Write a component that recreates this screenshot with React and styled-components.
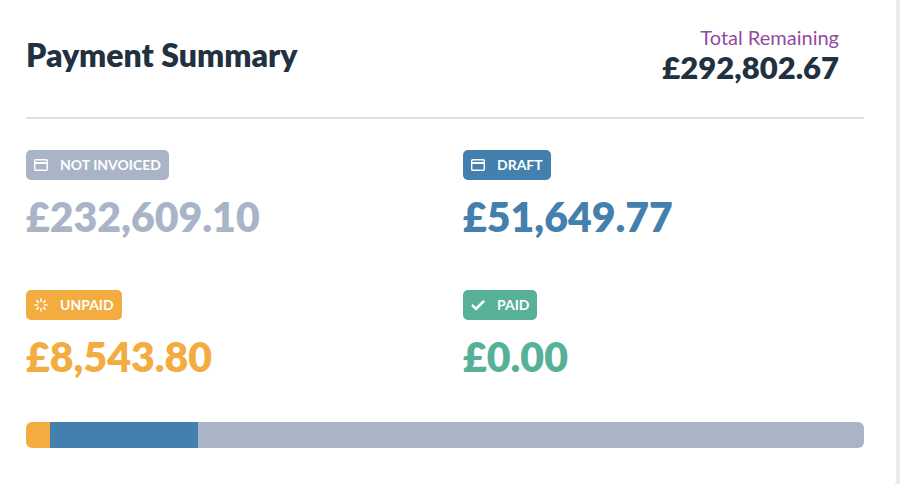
import React from 'react';
import styled, { createGlobalStyle } from 'styled-components';

const GlobalStyle = createGlobalStyle`
    * {
        box-sizing: border-box;
    }

    body {
        margin: 0;
        background: #e9ebf0;
        font-family: Lato, 'Open Sans', sans-serif;
        color: #22313f;
    }
`;

const Card = styled.section`
    margin-right: 4px;
    padding: 20px 32px 36px 26px;
    background: #fff;
    border-bottom-right-radius: 4px;
`;

const Header = styled.header`
    display: flex;
    justify-content: space-between;
    align-items: center;
    padding: 4px 25px 32px 0;
    border-bottom: 2px solid #dcdfe5;
`;

const Title = styled.h2`
    margin: 0;
    font-size: 32px;
    line-height: 40px;
    font-weight: 800;
`;

const Total = styled.div`
    text-align: right;
`;

const TotalLabel = styled.div`
    font-size: 20px;
    line-height: 26px;
    color: #934ba0;
`;

const TotalValue = styled.div`
    font-size: 31px;
    line-height: 35px;
    font-weight: 800;
`;

const Statuses = styled.div`
    display: grid;
    grid-template-columns: 1fr 1fr;
    gap: 48px 36px;
    padding: 31px 0 40px;
`;

const Status = styled.div`
    display: flex;
    flex-direction: column;
    align-items: flex-start;
    gap: 12px;
`;

const Badge = styled.div`
    display: flex;
    align-items: center;
    gap: 12px;
    height: 30px;
    padding: 0 8px;
    border-radius: 5px;
    background: ${({ $color }) => $color};
    color: #fff;
    font-size: 14px;
    line-height: 20px;
    font-weight: 700;
    text-transform: uppercase;

    svg {
        width: 14px;
        height: 14px;
    }
`;

const Amount = styled.div`
    font-size: 41px;
    line-height: 50px;
    font-weight: 800;
    color: ${({ $color }) => $color};
`;

const Bar = styled.div`
    display: flex;
    height: 26px;
    border-radius: 6px;
    overflow: hidden;
`;

const Segment = styled.div`
    background: ${({ $color }) => $color};
`;

const CardIcon = () => (
    <svg viewBox="0 0 14 14" fill="none" stroke="currentColor">
        <rect x="0.7" y="1.7" width="12.6" height="10.6" rx="1" strokeWidth="1.4" />
        <path d="M1 5h12" strokeWidth="2" />
    </svg>
);

const SpinnerIcon = () => (
    <svg
        viewBox="0 0 14 14"
        fill="none"
        stroke="currentColor"
        strokeWidth="1.5"
        strokeLinecap="round"
    >
        <path d="M7 .9v2.6M7 10.5v2.6M.9 7h2.6M10.5 7h2.6M2.7 2.7l1.7 1.7M9.6 9.6l1.7 1.7M2.7 11.3l1.7-1.7M9.6 4.4l1.7-1.7" />
    </svg>
);

const CheckIcon = () => (
    <svg
        viewBox="0 0 14 14"
        fill="none"
        stroke="currentColor"
        strokeWidth="2.6"
    >
        <path d="M1 6.8l4 4 8-8" />
    </svg>
);

const statuses = [
    { label: 'Not invoiced', value: 232609.1, color: '#a9b5c6', icon: CardIcon },
    { label: 'Draft', value: 51649.77, color: '#4380ae', icon: CardIcon },
    { label: 'Unpaid', value: 8543.8, color: '#f3ac3f', icon: SpinnerIcon },
    { label: 'Paid', value: 0, color: '#56b198', icon: CheckIcon },
];

const total = statuses.reduce((sum, item) => sum + item.value, 0);

const formatMoney = (value) =>
    value.toLocaleString('en-GB', { style: 'currency', currency: 'GBP' });

function App() {
    // paid first, not invoiced last
    const segments = [...statuses].reverse();

    return (
        <>
            <GlobalStyle />
            <Card>
                <Header>
                    <Title>Payment Summary</Title>
                    <Total>
                        <TotalLabel>Total Remaining</TotalLabel>
                        <TotalValue>{formatMoney(total)}</TotalValue>
                    </Total>
                </Header>
                <Statuses>
                    {statuses.map(({ label, value, color, icon: Icon }) => (
                        <Status key={label}>
                            <Badge $color={color}>
                                <Icon />
                                {label}
                            </Badge>
                            <Amount $color={color}>{formatMoney(value)}</Amount>
                        </Status>
                    ))}
                </Statuses>
                <Bar>
                    {segments.map(({ label, value, color }) => (
                        <Segment
                            key={label}
                            $color={color}
                            style={{ width: `${(value / total) * 100}%` }}
                        />
                    ))}
                </Bar>
            </Card>
        </>
    );
}

export default App;
